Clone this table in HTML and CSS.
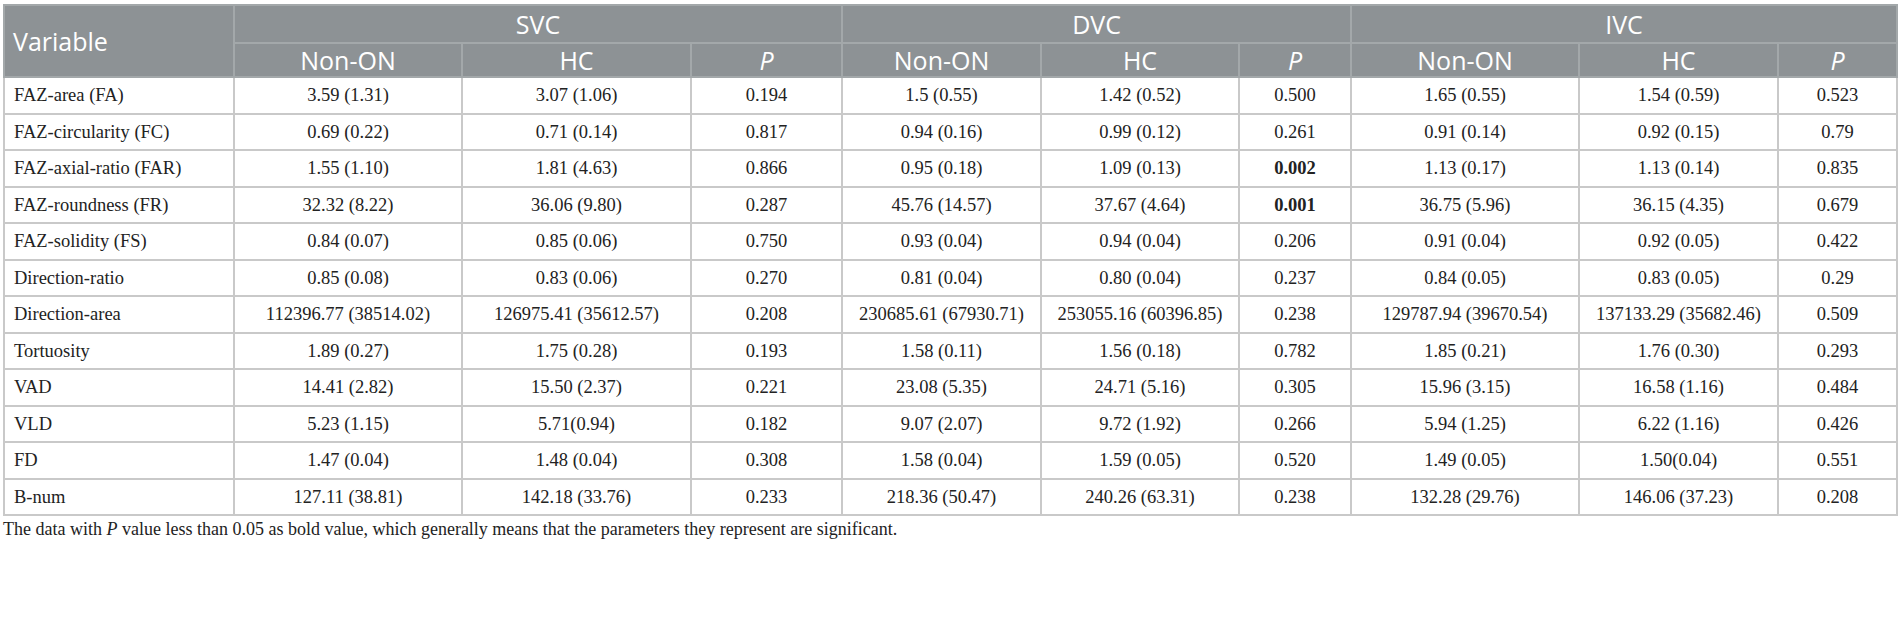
FILE: index.html
```html
<!DOCTYPE html>
<html lang="en">
<head>
    <meta charset="UTF-8">
    <meta name="viewport" content="width=device-width, initial-scale=1.0">
    <title>OCTA parameters: Non-ON vs HC</title>
    <link rel="stylesheet" href="styles.css">
</head>
<body>
    <div class="table-wrap">
        <table class="data-table">
            <colgroup>
                <col class="col-var">
                <col class="col-svc-non">
                <col class="col-svc-hc">
                <col class="col-svc-p">
                <col class="col-dvc-non">
                <col class="col-dvc-hc">
                <col class="col-dvc-p">
                <col class="col-ivc-non">
                <col class="col-ivc-hc">
                <col class="col-ivc-p">
            </colgroup>
            <thead>
                <tr class="group-row">
                    <th rowspan="2" class="th-var">Variable</th>
                    <th colspan="3">SVC</th>
                    <th colspan="3">DVC</th>
                    <th colspan="3">IVC</th>
                </tr>
                <tr class="sub-row">
                    <th>Non-ON</th>
                    <th>HC</th>
                    <th><i>P</i></th>
                    <th>Non-ON</th>
                    <th>HC</th>
                    <th><i>P</i></th>
                    <th>Non-ON</th>
                    <th>HC</th>
                    <th><i>P</i></th>
                </tr>
            </thead>
            <tbody>
                <tr>
                    <td>FAZ-area (FA)</td>
                    <td>3.59 (1.31)</td><td>3.07 (1.06)</td><td>0.194</td>
                    <td>1.5 (0.55)</td><td>1.42 (0.52)</td><td>0.500</td>
                    <td>1.65 (0.55)</td><td>1.54 (0.59)</td><td>0.523</td>
                </tr>
                <tr>
                    <td>FAZ-circularity (FC)</td>
                    <td>0.69 (0.22)</td><td>0.71 (0.14)</td><td>0.817</td>
                    <td>0.94 (0.16)</td><td>0.99 (0.12)</td><td>0.261</td>
                    <td>0.91 (0.14)</td><td>0.92 (0.15)</td><td>0.79</td>
                </tr>
                <tr>
                    <td>FAZ-axial-ratio (FAR)</td>
                    <td>1.55 (1.10)</td><td>1.81 (4.63)</td><td>0.866</td>
                    <td>0.95 (0.18)</td><td>1.09 (0.13)</td><td><b>0.002</b></td>
                    <td>1.13 (0.17)</td><td>1.13 (0.14)</td><td>0.835</td>
                </tr>
                <tr>
                    <td>FAZ-roundness (FR)</td>
                    <td>32.32 (8.22)</td><td>36.06 (9.80)</td><td>0.287</td>
                    <td>45.76 (14.57)</td><td>37.67 (4.64)</td><td><b>0.001</b></td>
                    <td>36.75 (5.96)</td><td>36.15 (4.35)</td><td>0.679</td>
                </tr>
                <tr>
                    <td>FAZ-solidity (FS)</td>
                    <td>0.84 (0.07)</td><td>0.85 (0.06)</td><td>0.750</td>
                    <td>0.93 (0.04)</td><td>0.94 (0.04)</td><td>0.206</td>
                    <td>0.91 (0.04)</td><td>0.92 (0.05)</td><td>0.422</td>
                </tr>
                <tr>
                    <td>Direction-ratio</td>
                    <td>0.85 (0.08)</td><td>0.83 (0.06)</td><td>0.270</td>
                    <td>0.81 (0.04)</td><td>0.80 (0.04)</td><td>0.237</td>
                    <td>0.84 (0.05)</td><td>0.83 (0.05)</td><td>0.29</td>
                </tr>
                <tr>
                    <td>Direction-area</td>
                    <td>112396.77 (38514.02)</td><td>126975.41 (35612.57)</td><td>0.208</td>
                    <td>230685.61 (67930.71)</td><td>253055.16 (60396.85)</td><td>0.238</td>
                    <td>129787.94 (39670.54)</td><td>137133.29 (35682.46)</td><td>0.509</td>
                </tr>
                <tr>
                    <td>Tortuosity</td>
                    <td>1.89 (0.27)</td><td>1.75 (0.28)</td><td>0.193</td>
                    <td>1.58 (0.11)</td><td>1.56 (0.18)</td><td>0.782</td>
                    <td>1.85 (0.21)</td><td>1.76 (0.30)</td><td>0.293</td>
                </tr>
                <tr>
                    <td>VAD</td>
                    <td>14.41 (2.82)</td><td>15.50 (2.37)</td><td>0.221</td>
                    <td>23.08 (5.35)</td><td>24.71 (5.16)</td><td>0.305</td>
                    <td>15.96 (3.15)</td><td>16.58 (1.16)</td><td>0.484</td>
                </tr>
                <tr>
                    <td>VLD</td>
                    <td>5.23 (1.15)</td><td>5.71(0.94)</td><td>0.182</td>
                    <td>9.07 (2.07)</td><td>9.72 (1.92)</td><td>0.266</td>
                    <td>5.94 (1.25)</td><td>6.22 (1.16)</td><td>0.426</td>
                </tr>
                <tr>
                    <td>FD</td>
                    <td>1.47 (0.04)</td><td>1.48 (0.04)</td><td>0.308</td>
                    <td>1.58 (0.04)</td><td>1.59 (0.05)</td><td>0.520</td>
                    <td>1.49 (0.05)</td><td>1.50(0.04)</td><td>0.551</td>
                </tr>
                <tr>
                    <td>B-num</td>
                    <td>127.11 (38.81)</td><td>142.18 (33.76)</td><td>0.233</td>
                    <td>218.36 (50.47)</td><td>240.26 (63.31)</td><td>0.238</td>
                    <td>132.28 (29.76)</td><td>146.06 (37.23)</td><td>0.208</td>
                </tr>
            </tbody>
        </table>
        <p class="footnote">The data with <i>P</i> value less than 0.05 as bold value, which generally means that the parameters they represent are significant.</p>
    </div>
</body>
</html>
```

FILE: styles.css
```css
body {
    margin: 0;
    background: #fff;
    color: #222;
    font-family: "Liberation Serif", "Times New Roman", serif;
}
.table-wrap {
    padding: 4px 4px 0 3px;
}
.data-table {
    width: 1893px;
    table-layout: fixed;
    border-collapse: collapse;
    border: 2px solid #c9c9c9;
}
.col-var { width: 230px; }
.col-svc-non { width: 228px; }
.col-svc-hc { width: 229px; }
.col-svc-p { width: 151px; }
.col-dvc-non { width: 199px; }
.col-dvc-hc { width: 198px; }
.col-dvc-p { width: 112px; }
.col-ivc-non { width: 228px; }
.col-ivc-hc { width: 199px; }
.col-ivc-p { width: 119px; }

.data-table th {
    background-color: #8d9295;
    color: #fff;
    font-family: "Open Sans", "Noto Sans", sans-serif;
    font-weight: 400;
    font-size: 25px;
    line-height: 1.2;
    padding: 0 8px;
    text-align: center;
    border: 2px solid #a3a8aa;
}
.group-row th {
    height: 36px;
}
.sub-row th {
    height: 32px;
}
.data-table th.th-var {
    text-align: left;
    padding-left: 8px;
}
.data-table td {
    height: 34.5px;
    padding: 0 8px;
    font-size: 18.5px;
    line-height: 1.2;
    text-align: center;
    border: 2px solid #c9c9c9;
    white-space: nowrap;
}
.data-table td:first-child {
    text-align: left;
    padding-left: 9px;
}
.footnote {
    margin: 3px 0 0;
    font-size: 18px;
    color: #222;
}
```
